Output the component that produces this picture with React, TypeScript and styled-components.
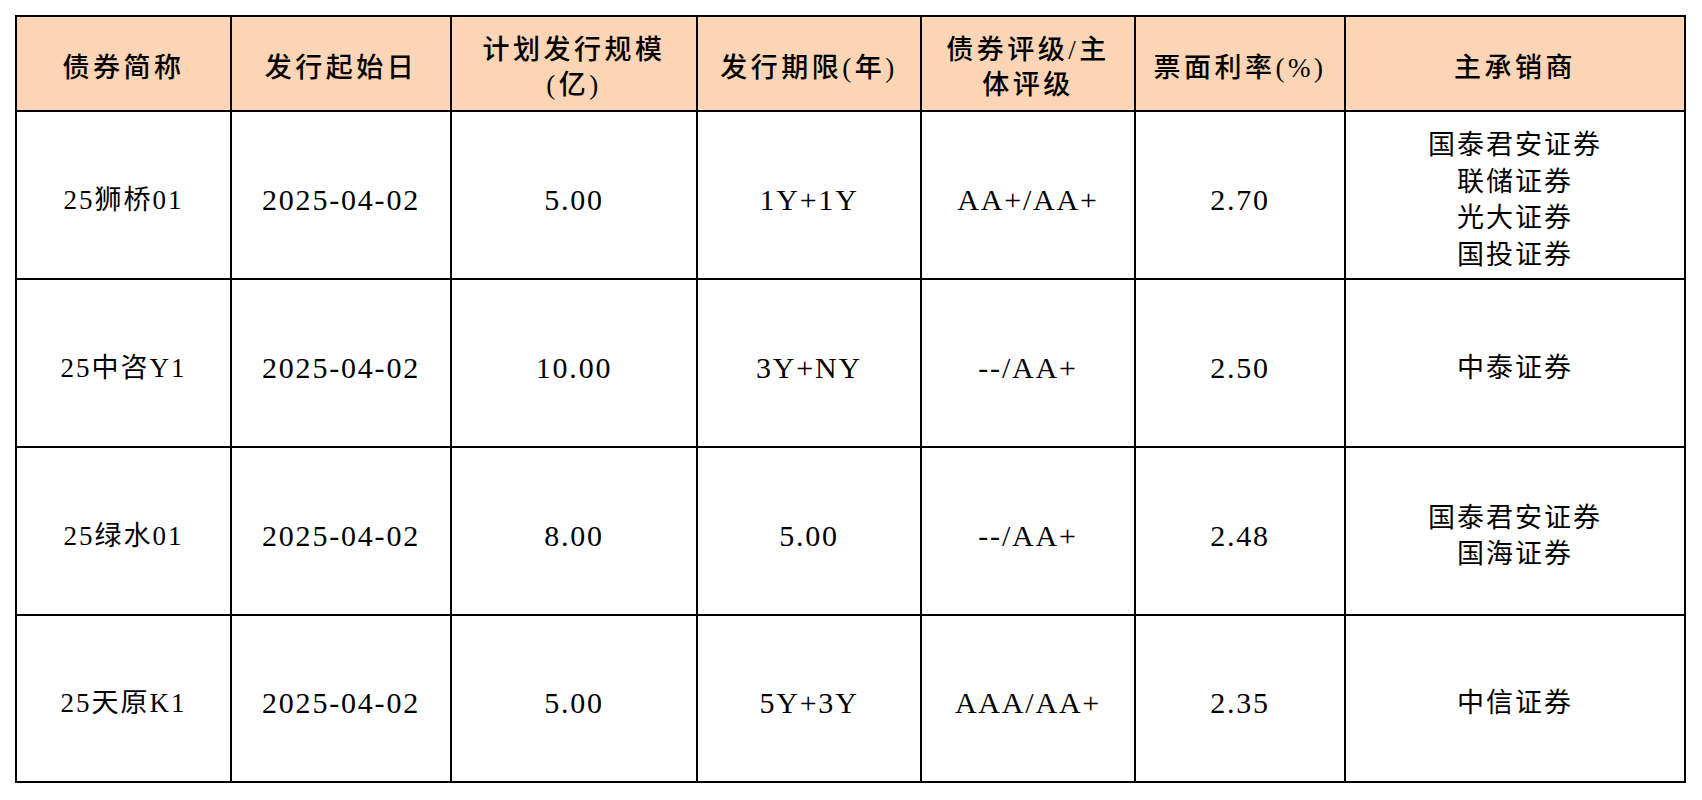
import React from 'react'
import styled, { createGlobalStyle } from 'styled-components'

type Bond = {
  name: string
  date: string
  size: string
  term: string
  rating: string
  rate: string
  underwriters: string[]
}

const bonds: Bond[] = [
  {
    name: '25狮桥01',
    date: '2025-04-02',
    size: '5.00',
    term: '1Y+1Y',
    rating: 'AA+/AA+',
    rate: '2.70',
    underwriters: ['国泰君安证券', '联储证券', '光大证券', '国投证券'],
  },
  {
    name: '25中咨Y1',
    date: '2025-04-02',
    size: '10.00',
    term: '3Y+NY',
    rating: '--/AA+',
    rate: '2.50',
    underwriters: ['中泰证券'],
  },
  {
    name: '25绿水01',
    date: '2025-04-02',
    size: '8.00',
    term: '5.00',
    rating: '--/AA+',
    rate: '2.48',
    underwriters: ['国泰君安证券', '国海证券'],
  },
  {
    name: '25天原K1',
    date: '2025-04-02',
    size: '5.00',
    term: '5Y+3Y',
    rating: 'AAA/AA+',
    rate: '2.35',
    underwriters: ['中信证券'],
  },
]

const headers: string[][] = [
  ['债券简称'],
  ['发行起始日'],
  ['计划发行规模', '(亿)'],
  ['发行期限(年)'],
  ['债券评级/主', '体评级'],
  ['票面利率(%)'],
  ['主承销商'],
]

function App() {
  return (
    <>
      <GlobalStyle />
      <Page>
        <Table>
          {headers.map((lines, i) => (
            <HeadCell key={`h${i}`}>
              {lines.map((line) => (
                <Line key={line}>{line}</Line>
              ))}
            </HeadCell>
          ))}
          {bonds.map((b) => (
            <React.Fragment key={b.name}>
              <Cell>{b.name}</Cell>
              <Cell $numeric>{b.date}</Cell>
              <Cell $numeric>{b.size}</Cell>
              <Cell $numeric>{b.term}</Cell>
              <Cell $numeric>{b.rating}</Cell>
              <Cell $numeric>{b.rate}</Cell>
              <Cell>
                {b.underwriters.map((u) => (
                  <Line key={u}>{u}</Line>
                ))}
              </Cell>
            </React.Fragment>
          ))}
        </Table>
      </Page>
    </>
  )
}

export default App

const GlobalStyle = createGlobalStyle`
  html, body {
    margin: 0;
    padding: 0;
    background: #ffffff;
  }
  body {
    font-family: "Liberation Serif", "Noto Sans CJK SC", serif;
    color: #000000;
  }
`

const Page = styled.div`
  width: 1702px;
  height: 800px;
  padding: 15px 0 0 15px;
  box-sizing: border-box;
  background: #ffffff;
`

const Table = styled.div`
  display: grid;
  grid-template-columns: 215px 220px 246px 224px 214px 210px 340px;
  grid-template-rows: 95px 168px 168px 168px 167px;
  width: max-content;
  border-top: 2px solid #000;
  border-left: 2px solid #000;
`

const BaseCell = styled.div`
  display: flex;
  flex-direction: column;
  align-items: center;
  justify-content: center;
  text-align: center;
  border-right: 2px solid #000;
  border-bottom: 2px solid #000;
  box-sizing: border-box;
`

const HeadCell = styled(BaseCell)`
  background: #fbd5b5;
  font-family: "Liberation Serif", "Noto Sans CJK SC", serif;
  font-weight: 500;
  font-size: 27px;
  letter-spacing: 3.5px;
  line-height: 35px;
  padding-top: 9px;
`

const Cell = styled(BaseCell)<{ $numeric?: boolean }>`
  background: #ffffff;
  font-weight: 400;
  font-size: ${(p) => (p.$numeric ? '30px' : '27px')};
  letter-spacing: ${(p) => (p.$numeric ? '1.8px' : '2px')};
  line-height: 36.5px;
  padding-top: 10px;
`

const Line = styled.span`
  display: block;
  white-space: nowrap;
`
